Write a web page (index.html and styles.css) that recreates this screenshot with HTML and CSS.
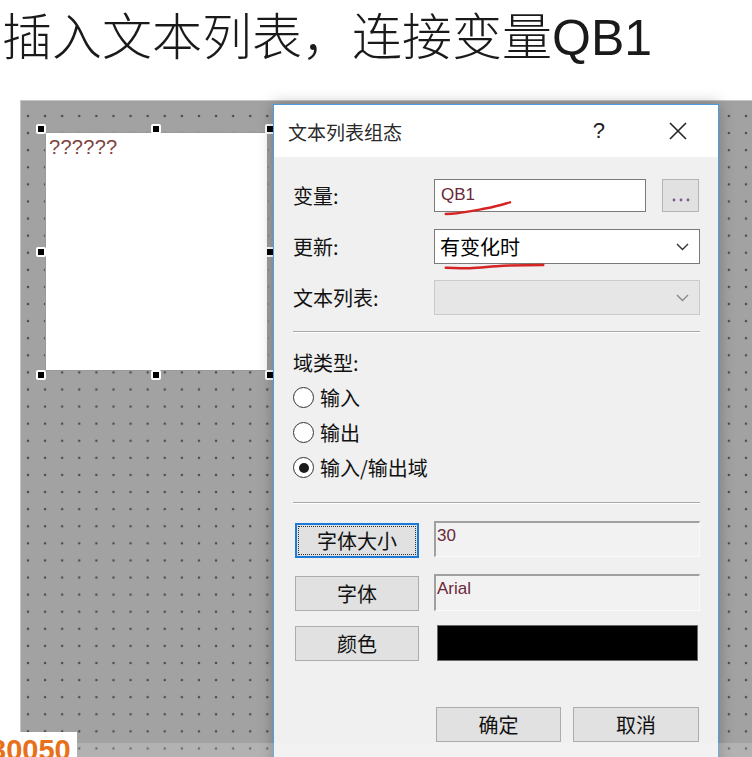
FILE: index.html
```html
<!DOCTYPE html>
<html lang="zh">
<head>
<meta charset="utf-8">
<title>文本列表组态</title>
<link rel="stylesheet" href="styles.css">
</head>
<body>
<h1 class="title">插入文本列表，连接变量<span class="latin">QB1</span></h1>

<div class="stage">
  <div class="widget"><span class="qmarks">??????</span></div>
  <span class="handle h1"></span>
  <span class="handle h2"></span>
  <span class="handle h3"></span>
  <span class="handle h4"></span>
  <span class="handle h5"></span>
  <span class="handle h6"></span>
  <span class="handle h7"></span>
  <span class="handle h8"></span>

  <div class="dialog">
    <div class="titlebar">
      <span class="dlg-title">文本列表组态</span>
      <span class="help">?</span>
      <svg class="close" width="18" height="18" viewBox="0 0 18 18"><path d="M1 1 L17 17 M17 1 L1 17" stroke="#222" stroke-width="1.6" fill="none"/></svg>
    </div>
    <div class="body">
      <div class="row r-var">
        <span class="lbl">变量:</span>
        <div class="ctrl pair">
          <div class="input">QB1
            <svg class="ink ink1" width="90" height="40" viewBox="0 0 90 40"><path d="M11.7 35 C16 34.8 19 34.6 22.7 34.3 C33 33 43 31 52.7 29.3 C62 27.5 70 25 76 23.3" stroke="#d42424" stroke-width="2.4" fill="none" stroke-linecap="round"/></svg>
          </div>
          <div class="browse"><svg width="20" height="6" viewBox="0 0 20 6"><circle cx="3" cy="3" r="1.4" fill="#7a5a8e"/><circle cx="10" cy="3" r="1.4" fill="#7a5a8e"/><circle cx="17" cy="3" r="1.4" fill="#7a5a8e"/></svg></div>
        </div>
      </div>
      <div class="row r-upd">
        <span class="lbl">更新:</span>
        <div class="ctrl select">
          <span class="sel-text">有变化时</span>
          <svg class="chev" width="13" height="8" viewBox="0 0 13 8"><path d="M1 1 L6.5 6.5 L12 1" stroke="#333" stroke-width="1.4" fill="none"/></svg>
          <svg class="ink ink2" width="120" height="44" viewBox="0 0 120 44"><path d="M11.7 38.7 C20 39 28 39.3 36 39.3 C48 38.6 58 37.3 69.3 36.7 C84 36.2 97 36 109.3 36" stroke="#d42424" stroke-width="2.4" fill="none" stroke-linecap="round"/></svg>
        </div>
      </div>
      <div class="row r-list">
        <span class="lbl">文本列表:</span>
        <div class="ctrl select disabled">
          <span class="sel-text"></span>
          <svg class="chev" width="13" height="8" viewBox="0 0 13 8"><path d="M1 1 L6.5 6.5 L12 1" stroke="#888" stroke-width="1.4" fill="none"/></svg>
        </div>
      </div>

      <div class="sep sep1"></div>

      <div class="group-lbl">域类型:</div>
      <div class="radio"><span class="dot"></span><span>输入</span></div>
      <div class="radio"><span class="dot"></span><span>输出</span></div>
      <div class="radio"><span class="dot on"></span><span>输入/输出域</span></div>

      <div class="sep sep2"></div>

      <div class="brow b1">
        <div class="btn focus"><span class="focus-ring">字体大小</span></div>
        <div class="field">30</div>
      </div>
      <div class="brow b2">
        <div class="btn">字体</div>
        <div class="field">Arial</div>
      </div>
      <div class="brow b3">
        <div class="btn">颜色</div>
        <div class="swatch"></div>
      </div>

      <div class="actions">
        <div class="btn ok">确定</div>
        <div class="btn cancel">取消</div>
      </div>
    </div>
  </div>
</div>

<div class="band"></div>
<div class="logo">30050</div>
</body>
</html>
```

FILE: styles.css
```css
html, body {
  margin: 0;
  padding: 0;
}

body {
  width: 752px;
  height: 757px;
  overflow: hidden;
  position: relative;
  background: #ffffff;
  font-family: "Noto Sans CJK SC", "Liberation Sans", sans-serif;
  color: #111;
}

.title {
  margin: 0;
  box-sizing: border-box;
  height: 100px;
  padding: 8px 0 0 2px;
  font-size: 50px;
  line-height: 50px;
  font-weight: 300;
  color: #1a1a1a;
  white-space: nowrap;
}

.title .latin {
  font-family: "Liberation Sans", sans-serif;
  font-weight: normal;
}

/* design canvas */
.stage {
  position: relative;
  margin-left: 20px;
  height: 657px;
  background-color: #a2a2a2;
  background-image: radial-gradient(circle, #4a4a4a 0.9px, rgba(74, 74, 74, 0) 1.6px);
  background-size: 17.1px 17.1px;
  background-position: -1.55px 6.45px;
  border-top: 1px solid #c6c6c6;
  border-left: 1px solid #c6c6c6;
}

.widget {
  position: absolute;
  left: 25px;
  top: 32px;
  width: 221px;
  height: 237px;
  background: #ffffff;
  box-shadow: 0 0 0 1px #9a9a9a;
}

.qmarks {
  display: block;
  padding: 3px 0 0 3px;
  font-family: "Liberation Sans", sans-serif;
  font-size: 20px;
  line-height: 22px;
  color: #7d4242;
  letter-spacing: 0.3px;
}

.handle {
  position: absolute;
  width: 6px;
  height: 6px;
  background: #000;
  border: 2px solid #fff;
  border-radius: 2px;
}

.h1 { left: 15px; top: 23px; }
.h2 { left: 130px; top: 23px; }
.h3 { left: 244px; top: 23px; }
.h4 { left: 15px; top: 146px; }
.h5 { left: 244px; top: 146px; }
.h6 { left: 15px; top: 269px; }
.h7 { left: 130px; top: 269px; }
.h8 { left: 244px; top: 269px; }

/* dialog window */
.dialog {
  position: absolute;
  left: 252px;
  top: 3px;
  width: 446px;
  height: 680px;
  box-sizing: border-box;
  border: 1px solid #4e9be0;
  background: #f0f0f0;
  box-shadow: 0 0 14px rgba(0, 0, 0, 0.28);
}

.titlebar {
  display: flex;
  align-items: center;
  height: 52px;
  background: #ffffff;
  padding: 0 31px 0 14px;
}

.dlg-title {
  flex: 1;
  font-size: 19px;
  color: #2a2a2a;
}

.help {
  font-family: "Liberation Sans", sans-serif;
  font-size: 22px;
  color: #222;
  margin-right: 64px;
}

.close {
  display: block;
}

.body {
  padding: 22px 18px 0 19px;
  font-size: 20px;
  line-height: 26px;
  color: #111;
}

.row {
  display: grid;
  grid-template-columns: 141px 266px;
  align-items: center;
}

.r-var { height: 33px; margin-bottom: 17px; }
.r-upd { height: 35px; margin-bottom: 16px; }
.r-list { height: 35px; margin-bottom: 16px; }

.lbl {
  white-space: nowrap;
}

.pair {
  display: flex;
  gap: 16px;
  height: 33px;
}

.input {
  position: relative;
  width: 212px;
  box-sizing: border-box;
  border: 1.5px solid #7a7a7a;
  background: #fff;
  font-family: "Liberation Sans", sans-serif;
  font-size: 17px;
  line-height: 22px;
  padding: 4px 0 0 6px;
  color: #6a2838;
}

.browse {
  width: 37px;
  box-sizing: border-box;
  border: 1.5px solid #b4b4b4;
  background: #e1e1e1;
  display: flex;
  align-items: flex-end;
  justify-content: center;
  padding-bottom: 8px;
}

.browse svg { display: block; }

.ink {
  position: absolute;
  left: -1.5px;
  top: -1.5px;
  overflow: visible;
  pointer-events: none;
}

.select {
  position: relative;
  display: flex;
  align-items: center;
  height: 35px;
  box-sizing: border-box;
  border: 1.5px solid #7a7a7a;
  background: #fff;
  padding: 0 10px 0 5px;
}

.select .sel-text {
  flex: 1;
  font-size: 20px;
  color: #000;
}

.select.disabled {
  background: #e6e6e6;
  border-color: #cacaca;
}

.chev { display: block; }

.sep {
  height: 0;
  border-top: 1px solid #a8a8a8;
  border-bottom: 1px solid #ffffff;
}

.sep1 { margin-bottom: 14px; }

.group-lbl {
  height: 33px;
  line-height: 32px;
}

.radio {
  display: flex;
  align-items: center;
  gap: 6px;
  height: 35px;
}

.dot {
  width: 21px;
  height: 21px;
  box-sizing: border-box;
  border: 1.5px solid #333;
  border-radius: 50%;
  background: #fff;
  display: flex;
  align-items: center;
  justify-content: center;
}

.dot.on::after {
  content: "";
  width: 10px;
  height: 10px;
  border-radius: 50%;
  background: #1a1a1a;
}

.sep2 { margin-top: 17px; margin-bottom: 17px; }

.brow {
  display: grid;
  grid-template-columns: 141px 266px;
  align-items: start;
  height: 37px;
}

.b1 { margin-bottom: 16px; }
.b2 { margin-bottom: 14px; }

.btn {
  box-sizing: border-box;
  height: 35px;
  border: 1.5px solid #adadad;
  background: #e1e1e1;
  display: flex;
  align-items: center;
  justify-content: center;
  font-size: 20px;
  color: #111;
}

.brow .btn {
  width: 124px;
  margin-left: 2px;
}

.b1 .btn, .b2 .btn { margin-top: 2px; }
.b3 .btn { margin-top: 1px; }

.btn.focus {
  border: 2px solid #1d7ad6;
  padding: 2px;
}

.focus-ring {
  flex: 1;
  align-self: stretch;
  display: flex;
  align-items: center;
  justify-content: center;
  outline: 1px dotted #333;
}

.field {
  box-sizing: border-box;
  height: 36px;
  border-top: 2px solid #a0a0a0;
  border-left: 2px solid #a0a0a0;
  border-right: 1px solid #fafafa;
  border-bottom: 1px solid #fafafa;
  background: #f2f2f2;
  font-family: "Liberation Sans", sans-serif;
  font-size: 17px;
  line-height: 20px;
  padding: 3px 0 0 1px;
  color: #6a2838;
}

.b2 .field { height: 37px; }

.swatch {
  margin-left: 3px;
  width: 261px;
  height: 36px;
  box-sizing: border-box;
  background: #000;
  border: 1px solid #6a6a6a;
}

.actions {
  display: flex;
  gap: 12px;
  margin-top: 45px;
  padding-left: 143px;
}

.actions .ok { width: 125px; }
.actions .cancel { width: 126px; }

/* video overlay elements */
.band {
  position: absolute;
  left: 0;
  top: 743px;
  width: 752px;
  height: 14px;
  background: rgba(255, 255, 255, 0.18);
}

.logo {
  position: absolute;
  left: 0;
  top: 732px;
  width: 77px;
  height: 25px;
  overflow: hidden;
  background: #ffffff;
  box-sizing: border-box;
  padding-top: 4px;
  font-family: "Liberation Sans", sans-serif;
  font-weight: bold;
  font-size: 29px;
  line-height: 29px;
  color: #e8701a;
  text-indent: -10px;
  white-space: nowrap;
}
```
